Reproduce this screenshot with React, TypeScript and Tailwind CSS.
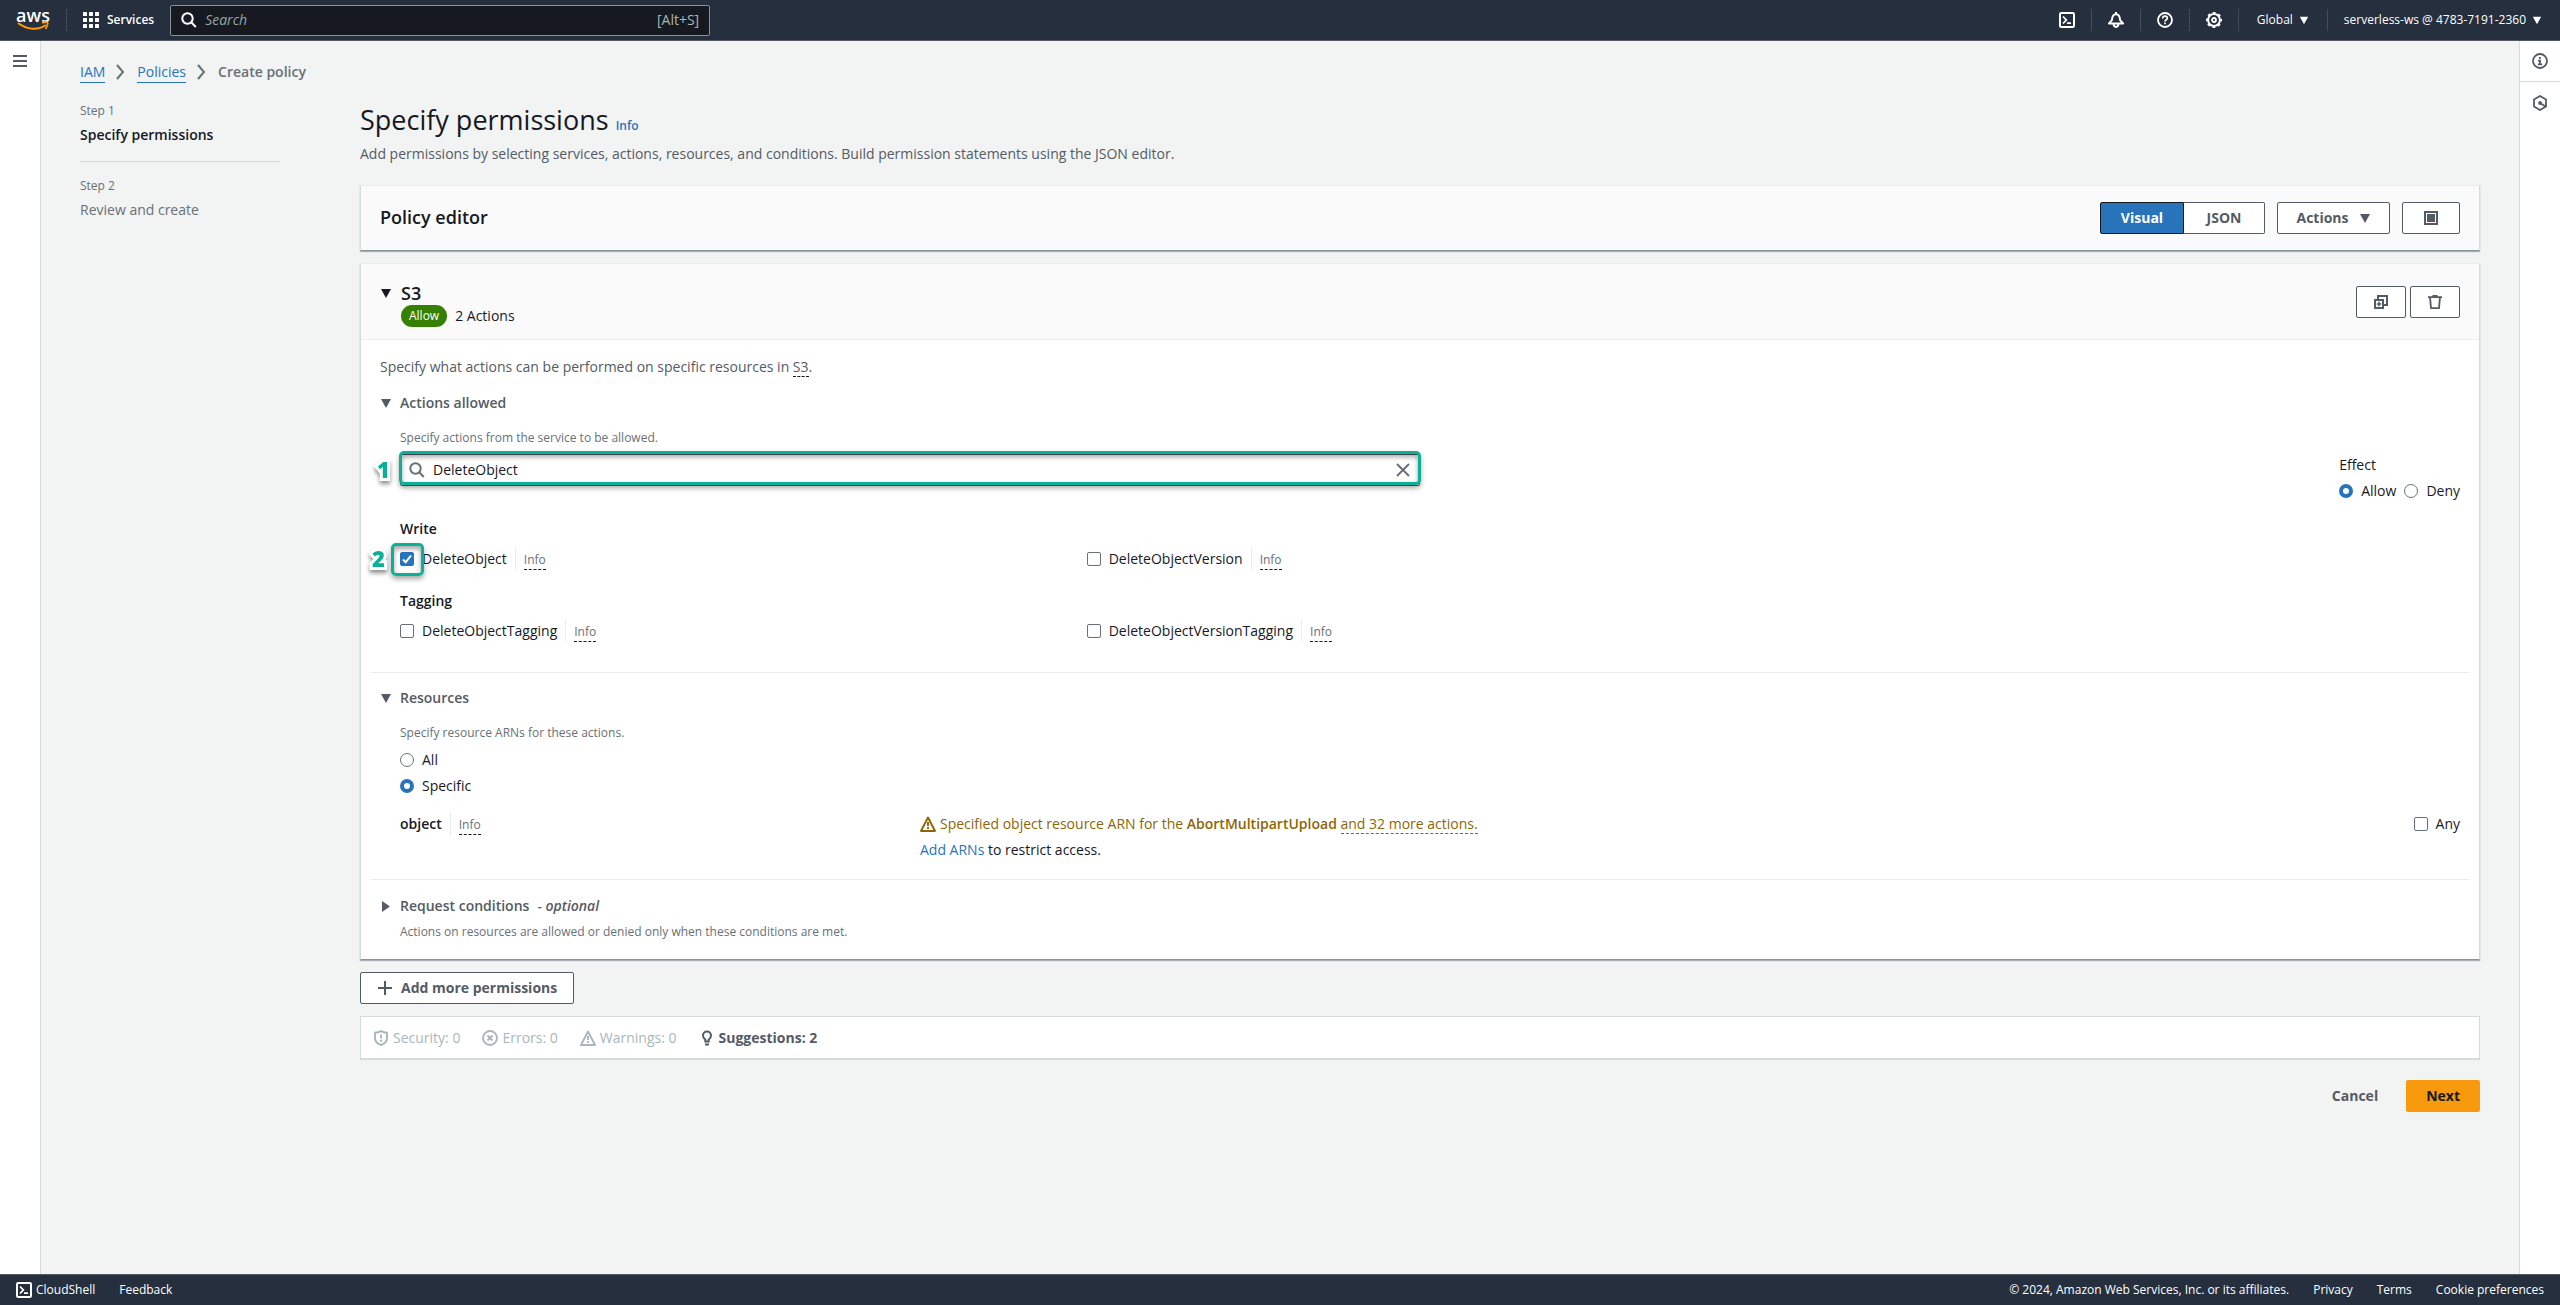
import { FC, ReactNode, useState } from 'react';

type IconProps = { className?: string };

// Icons, 16px grid
const TerminalIcon: FC<IconProps> = ({ className = 'size-4' }) => (
    <svg viewBox="0 0 16 16" className={className} fill="none" stroke="currentColor" strokeWidth="2" aria-hidden="true">
        <rect x="1" y="1" width="14" height="14" rx="1.2" />
        <path d="M4 4.5 7.3 8 4 11.5M8 11.2h4" strokeWidth="1.8" />
    </svg>
);

const BellIcon: FC<IconProps> = ({ className = 'size-4' }) => (
    <svg viewBox="0 0 16 16" className={className} fill="none" stroke="currentColor" strokeWidth="2" strokeLinejoin="round" aria-hidden="true">
        <path d="M8 0v2M3.9 8.2C4.1 4.6 5.4 2.2 8 2.2s3.900 2.400 4.100 6L15 11.400H1z" />
        <path d="M5.600 11.500c0 2.200 1 3.400 2.400 3.400s2.400-1.200 2.400-3.400" />
    </svg>
);

const HelpIcon: FC<IconProps> = ({ className = 'size-4' }) => (
    <svg viewBox="0 0 16 16" className={className} fill="none" stroke="currentColor" strokeWidth="1.8" aria-hidden="true">
        <circle cx="8" cy="8" r="7" />
        <path d="M5.700 6.400C5.700 5 6.700 4.200 8 4.200s2.300.800 2.300 2c0 1.500-2.300 1.500-2.300 3.200M8 10.600v1.700" strokeWidth="1.700" />
    </svg>
);

const GearIcon: FC<IconProps> = ({ className = 'size-4' }) => (
    <svg viewBox="0 0 16 16" className={className} fill="none" stroke="currentColor" strokeWidth="2" aria-hidden="true">
        <circle cx="8" cy="8" r="5.900" />
        <circle cx="8" cy="8" r="7.200" strokeWidth="1.700" strokeDasharray="2.830 2.824" strokeDashoffset="1.400" />
        <circle cx="8" cy="8" r="2" strokeWidth="1.800" />
    </svg>
);

const GridIcon: FC<IconProps> = ({ className = 'size-4' }) => (
    <svg viewBox="0 0 16 16" className={className} fill="currentColor" aria-hidden="true">
        {[0, 6, 12].map((y) => [0, 6, 12].map((x) => (
            <rect key={`${x}-${y}`} x={x} y={y} width="4" height="4" rx="0.500" />
        )))}
    </svg>
);

const SearchIcon: FC<IconProps> = ({ className = 'size-4' }) => (
    <svg viewBox="0 0 16 16" className={className} fill="none" stroke="currentColor" strokeWidth="2" aria-hidden="true">
        <circle cx="6.500" cy="6.500" r="5.200" />
        <path d="m10.200 10.200 4.600 4.800" />
    </svg>
);

const InfoIcon: FC<IconProps> = ({ className = 'size-4' }) => (
    <svg viewBox="0 0 16 16" className={className} fill="none" stroke="currentColor" strokeWidth="1.800" aria-hidden="true">
        <circle cx="8" cy="8" r="7" />
        <path d="M7.900 4v2M6 7.600h2v3.500M5.800 11.300h4.400" />
    </svg>
);

const HexagonIcon: FC<IconProps> = ({ className = 'size-4' }) => (
    <svg viewBox="0 0 16 16" className={className} fill="none" stroke="currentColor" strokeWidth="1.800" aria-hidden="true">
        <path d="M8 1 14 4.400v7.200L8 15 2 11.600V4.400z" />
        <circle cx="8" cy="8" r="1.900" fill="currentColor" stroke="none" />
        <path d="m8 8 5.500 3.500" />
    </svg>
);

const DuplicateIcon: FC<IconProps> = ({ className = 'size-4' }) => (
    <svg viewBox="0 0 16 16" className={className} fill="none" stroke="currentColor" strokeWidth="2" aria-hidden="true">
        <path d="M2 6h8v8H2zM5 5V2h9v9h-3" />
        <path d="M6 7.800v4.400M3.800 10h4.400" strokeWidth="1.600" />
    </svg>
);

const TrashIcon: FC<IconProps> = ({ className = 'size-4' }) => (
    <svg viewBox="0 0 16 16" className={className} fill="none" stroke="currentColor" strokeWidth="1.800" aria-hidden="true">
        <path d="M1 3.200h14M5.500 2h5M3 3.200l1 11h8l1-11" />
    </svg>
);

const FullscreenIcon: FC<IconProps> = ({ className = 'size-4' }) => (
    <svg viewBox="0 0 16 16" className={className} aria-hidden="true">
        <rect x="2" y="2" width="12" height="12" fill="none" stroke="currentColor" strokeWidth="2" />
        <rect x="4" y="4" width="8" height="8" fill="currentColor" />
    </svg>
);

const PlusIcon: FC<IconProps> = ({ className = 'size-4' }) => (
    <svg viewBox="0 0 16 16" className={className} fill="none" stroke="currentColor" strokeWidth="2" aria-hidden="true">
        <path d="M8 1v14M1 8h14" />
    </svg>
);

const CloseIcon: FC<IconProps> = ({ className = 'size-4' }) => (
    <svg viewBox="0 0 16 16" className={className} fill="none" stroke="currentColor" strokeWidth="2" aria-hidden="true">
        <path d="m2 2 12 12M14 2 2 14" />
    </svg>
);

const WarningIcon: FC<IconProps> = ({ className = 'size-4' }) => (
    <svg viewBox="0 0 16 16" className={className} fill="none" stroke="currentColor" strokeWidth="1.900" strokeLinejoin="round" aria-hidden="true">
        <path d="M8 1.500 15 15H1z" />
        <path d="M8 6v4M8 11v2" />
    </svg>
);

const ShieldIcon: FC<IconProps> = ({ className = 'size-4' }) => (
    <svg viewBox="0 0 16 16" className={className} fill="none" stroke="currentColor" strokeWidth="1.900" aria-hidden="true">
        <path d="M8 1.200c1.800 1 3.800 1.500 6 1.500V8c0 3.500-2.500 5.800-6 7-3.500-1.200-6-3.500-6-7V2.700c2.200 0 4.200-.5 6-1.500z" />
        <path d="M8 4.500v4M8 9.800v2" />
    </svg>
);

const ErrorIcon: FC<IconProps> = ({ className = 'size-4' }) => (
    <svg viewBox="0 0 16 16" className={className} fill="none" stroke="currentColor" strokeWidth="1.900" aria-hidden="true">
        <circle cx="8" cy="8" r="7" />
        <path d="m5.500 5.500 5 5M10.500 5.500l-5 5" />
    </svg>
);

const BulbIcon: FC<IconProps> = ({ className = 'size-4' }) => (
    <svg viewBox="0 0 16 16" className={className} fill="none" stroke="currentColor" strokeWidth="2" aria-hidden="true">
        <path d="M6.300 11.500V9.600C4.900 8.700 4 7.300 4 5.600a4 4 0 0 1 8 0c0 1.700-.9 3.100-2.300 4v1.900zM6 14.500h4" />
    </svg>
);

const MenuIcon: FC<IconProps> = ({ className = 'size-4' }) => (
    <svg viewBox="0 0 16 16" className={className} stroke="currentColor" strokeWidth="2" aria-hidden="true">
        <path d="M1 3h14M1 8h14M1 13h14" />
    </svg>
);

const ChevronIcon: FC<IconProps> = ({ className = 'size-4' }) => (
    <svg viewBox="0 0 16 16" className={className} fill="none" stroke="currentColor" strokeWidth="2" aria-hidden="true">
        <path d="m4 1 6 7-6 7" />
    </svg>
);

const CaretDown: FC<IconProps> = ({ className = 'size-3' }) => (
    <svg viewBox="0 0 12 12" className={className} fill="currentColor" aria-hidden="true">
        <path d="M1 2h10L6 11z" />
    </svg>
);

const CaretRight: FC<IconProps> = ({ className = 'size-3' }) => (
    <svg viewBox="0 0 12 12" className={className} fill="currentColor" aria-hidden="true">
        <path d="M2 1v11l8-5.500z" />
    </svg>
);

// The word is real text, only the smile is a drawing
const AwsLogo: FC = () => (
    <a href="#home" className="flex flex-col items-center font-['Open_Sans',sans-serif] text-lg leading-3 font-semibold text-white">
        aws
        <svg viewBox="0 0 32 10" className="h-2.5 w-8" fill="none" stroke="#ff9900" strokeWidth="2" aria-hidden="true">
            <path d="M1 2c9 7 20 7.500 28 2" />
            <path d="M25 2c3-1 5-1 5.500-.3S30 5.500 28.500 8" strokeWidth="1.700" />
        </svg>
    </a>
);

const HeaderDivider: FC = () => <span className="h-[22px] w-px shrink-0 bg-[#414d5c]" />;

const InfoLink: FC = () => (
    <span className="border-l border-[#eaeded] pl-2 leading-[22px]">
        <button type="button" className="border-b border-dashed border-[#16191f] text-xs leading-[18px] text-[#687078]">Info</button>
    </span>
);

const CheckOption: FC<{ label: string; checked?: boolean; info?: boolean; children?: ReactNode }> = ({
    label,
    checked = false,
    info = true,
    children
}) => {
    const [on, setOn] = useState(checked);
    return (
        <div className="flex items-center gap-2">
            <label className="relative flex items-center gap-2">
                <input
                    type="checkbox"
                    checked={on}
                    onChange={() => setOn(!on)}
                    className="peer size-3.5 appearance-none rounded-xs border border-[#687078] bg-white checked:border-[#2874bb] checked:bg-[#2874bb]"
                />
                <svg viewBox="0 0 14 14" className="pointer-events-none absolute left-0 hidden size-3.5 peer-checked:block" fill="none" stroke="#fff" strokeWidth="2" aria-hidden="true">
                    <path d="m3 7.500 2.700 2.700L11 3.500" />
                </svg>
                {label}
                {children}
            </label>
            {info && <InfoLink />}
        </div>
    );
};

const RadioOption: FC<{ name: string; label: string; checked?: boolean }> = ({ name, label, checked }) => (
    <label className="flex items-center gap-2">
        <input
            type="radio"
            name={name}
            defaultChecked={checked}
            className="size-3.5 appearance-none rounded-full border border-[#687078] bg-white checked:border-4 checked:border-[#2874bb]"
        />
        {label}
    </label>
);

const SectionTitle: FC<{ title: string; open?: boolean; children?: ReactNode }> = ({ title, open = true, children }) => (
    <button type="button" aria-expanded={open} className="flex items-center gap-2 font-semibold text-[#545b64]">
        {open ? <CaretDown /> : <CaretRight />}
        <span>{title}{children}</span>
    </button>
);

const buttonClasses = 'flex h-8 items-center justify-center rounded-xs border border-[#545b64] bg-white font-bold text-[#545b64]';
const cardClasses = 'border border-t-[#eaeded] border-x-[#d5dbdb] border-b-[#879596] shadow-[0_1px_1px_rgba(0,28,36,0.300)]';
const calloutClasses = 'pointer-events-none absolute rounded-[5px] border-3 border-[#0bb097] shadow-[0_3px_5px_rgba(0,0,0,0.350),inset_0_3px_5px_rgba(0,0,0,0.350)]';
const calloutNumberClasses = 'pointer-events-none absolute text-[22px] leading-6 font-extrabold text-[#0bb097] [filter:drop-shadow(0_3px_2px_rgba(0,0,0,0.450))] [-webkit-text-stroke:6px_white] [paint-order:stroke_fill]';

const TopBar: FC = () => (
    <header className="flex h-[41px] items-center border-b border-[#545b64] bg-[#252f3e] text-xs font-medium text-white">
        <div className="flex w-[66px] justify-center">
            <AwsLogo />
        </div>
        <HeaderDivider />
        <button type="button" className="ml-4 flex items-center gap-2 font-semibold">
            <GridIcon />
            Services
        </button>
        <label className="ml-4 flex h-[31px] w-[540px] items-center gap-2 rounded-xs border border-[#879596] bg-[#16191f] px-2.5 text-sm font-normal text-[#aab7b8]">
            <SearchIcon className="size-4 text-white" />
            <input type="search" placeholder="Search" aria-label="Search" className="flex-1 bg-transparent outline-none placeholder:text-[#95a5a6] placeholder:italic" />
            [Alt+S]
        </label>
        <div className="ml-auto flex items-center gap-4">
            <button type="button" aria-label="CloudShell"><TerminalIcon /></button>
            <HeaderDivider />
            <button type="button" aria-label="Notifications"><BellIcon /></button>
            <HeaderDivider />
            <button type="button" aria-label="Help"><HelpIcon /></button>
            <HeaderDivider />
            <button type="button" aria-label="Settings"><GearIcon /></button>
            <HeaderDivider />
            <button type="button" className="flex items-center gap-1.5 px-0.5">Global <CaretDown className="size-2.5" /></button>
            <HeaderDivider />
            <button type="button" className="flex items-center gap-1.5 pr-[18px]">serverless-ws @ 4783-7191-2360 <CaretDown className="size-2.5" /></button>
        </div>
    </header>
);

const Steps: FC = () => (
    <nav className="w-[200px] shrink-0 text-[#687078]" aria-label="Steps">
        <div className="flex flex-col gap-[5px] border-b border-[#d5dbdb] pb-[15px]">
            <span className="text-xs">Step 1</span>
            <span className="font-semibold text-[#16191f]">Specify permissions</span>
        </div>
        <div className="flex flex-col gap-[5px] pt-4">
            <span className="text-xs">Step 2</span>
            <span>Review and create</span>
        </div>
    </nav>
);

const PolicyEditorBar: FC = () => (
    <section className={`mt-5 flex items-start justify-between bg-[#fafafa] px-[19px] py-4 ${cardClasses}`}>
        <h2 className="pt-1 text-lg leading-[22px] font-semibold">Policy editor</h2>
        <div className="flex gap-3">
            <div className="flex">
                <button type="button" className="h-8 w-[84px] rounded-l-xs border border-[#16191f] bg-[#2874bb] font-bold text-white">Visual</button>
                <button type="button" className="h-8 w-[81px] rounded-r-xs border border-l-0 border-[#545b64] bg-white font-bold text-[#545b64]">JSON</button>
            </div>
            <button type="button" className={`w-[113px] gap-2.5 ${buttonClasses}`}>Actions <CaretDown /></button>
            <button type="button" aria-label="Full screen" className={`w-[58px] ${buttonClasses}`}><FullscreenIcon /></button>
        </div>
    </section>
);

const ActionsSection: FC = () => {
    const [query, setQuery] = useState('DeleteObject');
    return (
        <div className="mt-3.5 px-[19px]">
            <SectionTitle title="Actions allowed" />
            <div className="flex items-start justify-between pt-4 pl-5">
                <div className="w-1/2 max-w-[1020px]">
                    <label htmlFor="action-filter" className="block text-xs text-[#687078]">Specify actions from the service to be allowed.</label>
                    <div className="relative mt-2 flex h-8 items-center gap-2 rounded-xs border border-[#545b64] bg-white px-2 text-[#687078]">
                        <SearchIcon />
                        <input
                            id="action-filter"
                            value={query}
                            onChange={(e) => setQuery(e.target.value)}
                            className="flex-1 text-[#16191f] outline-none"
                        />
                        <button type="button" aria-label="Clear" onClick={() => setQuery('')}><CloseIcon /></button>
                        <span className={`-inset-x-0.5 -top-1 bottom-0 ${calloutClasses}`} />
                        <span className={`top-0.5 -left-6 ${calloutNumberClasses}`}>1</span>
                    </div>
                </div>
                <fieldset className="pt-6">
                    <legend className="contents">Effect</legend>
                    <div className="mt-1 flex gap-2">
                        <RadioOption name="effect" label="Allow" checked />
                        <RadioOption name="effect" label="Deny" />
                    </div>
                </fieldset>
            </div>
            <div className="mt-4 pl-5">
                <h4 className="font-semibold">Write</h4>
                <div className="mt-2 grid grid-cols-3">
                    <CheckOption label="DeleteObject" checked>
                        <span className={`-top-[5px] -left-[9px] h-[33px] w-[33px] ${calloutClasses}`} />
                        <span className={`-top-0.5 -left-7 ${calloutNumberClasses}`}>2</span>
                    </CheckOption>
                    <CheckOption label="DeleteObjectVersion" />
                </div>
                <h4 className="mt-5 font-semibold">Tagging</h4>
                <div className="mt-2 grid grid-cols-3">
                    <CheckOption label="DeleteObjectTagging" />
                    <CheckOption label="DeleteObjectVersionTagging" />
                </div>
            </div>
        </div>
    );
};

const ResourcesSection: FC = () => (
    <div className="mt-3.5 px-[19px]">
        <SectionTitle title="Resources" />
        <div className="pt-4 pl-5">
            <p className="text-xs text-[#687078]">Specify resource ARNs for these actions.</p>
            <div className="mt-2 flex flex-col gap-1">
                <RadioOption name="resources" label="All" />
                <RadioOption name="resources" label="Specific" checked />
            </div>
            <div className="mt-4 grid grid-cols-4 items-start gap-5">
                <div className="flex items-center gap-2">
                    <span className="font-semibold">object</span>
                    <InfoLink />
                </div>
                <div className="col-span-2 flex flex-col gap-1">
                    <p className="flex items-center gap-1 text-[#8d6605]">
                        <WarningIcon />
                        <span>
                            Specified object resource ARN for the <b className="font-semibold">AbortMultipartUpload</b>{' '}
                            <span className="border-b border-dashed border-[#8d6605]">and 32 more actions.</span>
                        </span>
                    </p>
                    <p><a href="#arns" className="text-[#2874bb]">Add ARNs</a> to restrict access.</p>
                </div>
                <div className="justify-self-end">
                    <CheckOption label="Any" info={false} />
                </div>
            </div>
        </div>
    </div>
);

const StatementCard: FC = () => (
    <section className={`mt-3 bg-white pb-[19px] ${cardClasses}`}>
        <div className="flex items-center justify-between border-b border-[#eaeded] bg-[#fafafa] px-[19px] py-3">
            <div className="pt-1.5">
                <button type="button" aria-expanded="true" className="flex items-center gap-[9px] text-lg leading-[22px] font-semibold">
                    <CaretDown />
                    S3
                </button>
                <div className="mt-px flex items-center gap-2 pl-[21px]">
                    <span className="rounded-full bg-[#358000] px-2 text-xs leading-[22px] text-white">Allow</span>
                    2 Actions
                </div>
            </div>
            <div className="flex gap-1">
                <button type="button" aria-label="Duplicate" className={`w-[50px] ${buttonClasses}`}><DuplicateIcon /></button>
                <button type="button" aria-label="Remove" className={`w-[50px] ${buttonClasses}`}><TrashIcon /></button>
            </div>
        </div>
        <p className="px-[19px] pt-4 text-[#545b64]">
            Specify what actions can be performed on specific resources in <span className="border-b border-dashed border-[#16191f]">S3</span>.
        </p>
        <ActionsSection />
        <hr className="mx-2.5 mt-[30px] border-[#eaeded]" />
        <ResourcesSection />
        <hr className="mx-2.5 mt-[18px] border-[#eaeded]" />
        <div className="mt-[15px] px-[19px]">
            <SectionTitle title="Request conditions" open={false}>
                <i className="pl-2">- optional</i>
            </SectionTitle>
            <p className="mt-[7px] pl-5 text-xs text-[#687078]">Actions on resources are allowed or denied only when these conditions are met.</p>
        </div>
    </section>
);

const Findings: FC = () => (
    <div className="mt-3 flex h-11 items-center gap-[22px] border border-b-2 border-[#d5dbdb] bg-white px-3 text-[#aab7b8]">
        <span className="flex items-center gap-1"><ShieldIcon />Security: 0</span>
        <span className="flex items-center gap-1"><ErrorIcon />Errors: 0</span>
        <span className="flex items-center gap-1"><WarningIcon />Warnings: 0</span>
        <button type="button" className="flex items-center gap-1 font-bold text-[#545b64]"><BulbIcon />Suggestions: 2</button>
    </div>
);

const Footer: FC = () => (
    <footer className="flex h-[31px] items-center justify-between border-t border-[#545b64] bg-[#252f3e] px-4 text-xs font-medium text-white">
        <div className="flex gap-6">
            <button type="button" className="flex items-center gap-1"><TerminalIcon />CloudShell</button>
            <a href="#feedback">Feedback</a>
        </div>
        <div className="flex gap-6">
            <span>© 2024, Amazon Web Services, Inc. or its affiliates.</span>
            <a href="#privacy">Privacy</a>
            <a href="#terms">Terms</a>
            <a href="#cookies">Cookie preferences</a>
        </div>
    </footer>
);

const App: FC = () => (
    <div className="flex min-h-screen flex-col bg-[#f2f3f3] font-['Open_Sans','Noto_Sans',sans-serif] text-sm leading-[22px] text-[#16191f]">
        <TopBar />
        <div className="flex flex-1">
            <aside className="flex w-[41px] shrink-0 flex-col items-center border-r border-[#d5dbdb] bg-white pt-3 text-[#545b64]">
                <button type="button" aria-label="Open navigation"><MenuIcon /></button>
            </aside>
            <main className="min-w-0 flex-1 px-[39px] pt-5">
                <nav aria-label="Breadcrumbs" className="flex items-center gap-2 text-[#2874bb]">
                    <a href="#iam" className="border-b border-[#2874bb] leading-5">IAM</a>
                    <ChevronIcon className="size-4 text-[#687078]" />
                    <a href="#policies" className="border-b border-[#2874bb] leading-5">Policies</a>
                    <ChevronIcon className="size-4 text-[#687078]" />
                    <span className="font-semibold text-[#687078]">Create policy</span>
                </nav>
                <div className="flex gap-20 pt-5">
                    <Steps />
                    <div className="min-w-0 flex-1">
                        <h1 className="text-[27px] leading-[34px]">
                            Specify permissions <a href="#info" className="text-xs font-semibold text-[#2874bb]">Info</a>
                        </h1>
                        <p className="mt-1.5 text-[#545b64]">Add permissions by selecting services, actions, resources, and conditions. Build permission statements using the JSON editor.</p>
                        <PolicyEditorBar />
                        <StatementCard />
                        <button type="button" className={`mt-3 gap-2 px-4 ${buttonClasses}`}><PlusIcon />Add more permissions</button>
                        <Findings />
                        <div className="mt-5 flex justify-end gap-2">
                            <button type="button" className="h-8 px-5 font-bold text-[#545b64]">Cancel</button>
                            <button type="button" className="h-8 rounded-xs bg-[#f79a0e] px-5 font-bold">Next</button>
                        </div>
                    </div>
                </div>
            </main>
            <aside className="flex w-[41px] shrink-0 flex-col items-center border-l border-[#d5dbdb] bg-white text-[#545b64]">
                <button type="button" aria-label="Info panel" className="flex h-[41px] w-full items-center justify-center border-b border-[#d5dbdb]"><InfoIcon /></button>
                <button type="button" aria-label="Tutorials" className="flex h-[41px] items-center"><HexagonIcon /></button>
            </aside>
        </div>
        <Footer />
    </div>
);

export default App;
